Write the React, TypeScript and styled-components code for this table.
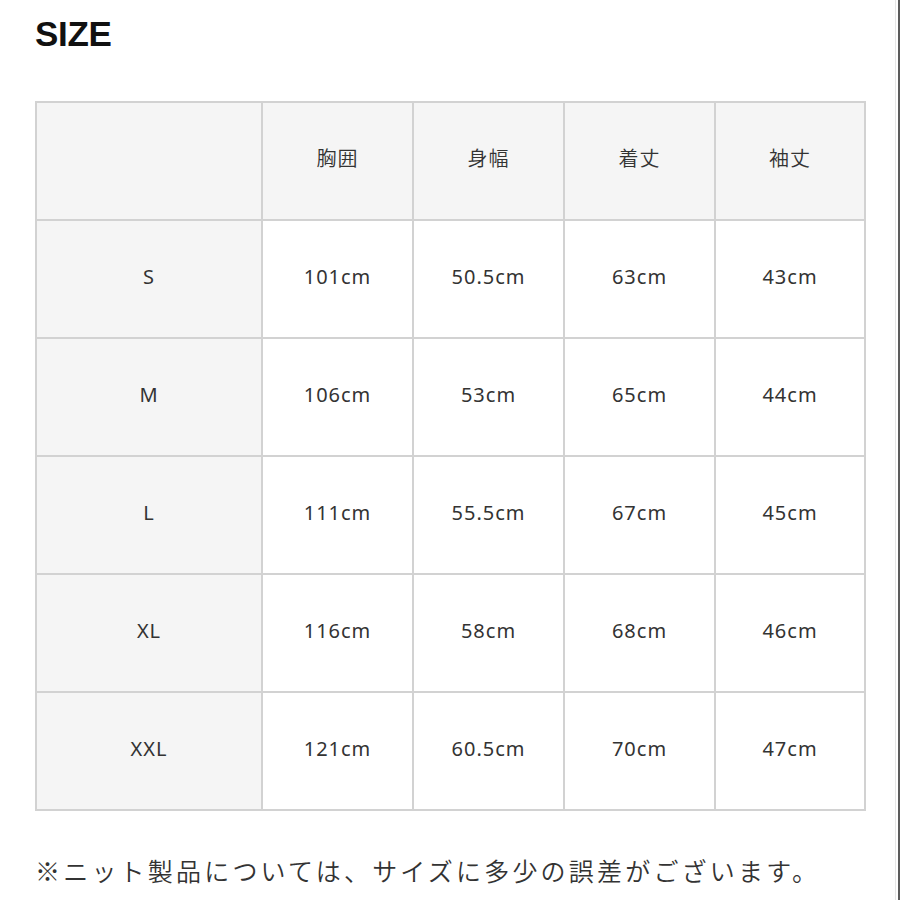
import React from "react";
import styled, { createGlobalStyle } from "styled-components";

const Global = createGlobalStyle`
  html, body { margin: 0; padding: 0; background: #fff; }
  body { font-family: "Noto Sans", "Noto Sans CJK JP", sans-serif; }
`;

const Page = styled.div`
  box-sizing: border-box;
  width: 900px;
  min-height: 900px;
  padding: 14px 0 0 35px;
  border-right: 2px solid #5c5c5c;
  position: relative;
`;

const EdgeLine = styled.div`
  position: absolute;
  top: 0;
  bottom: 0;
  right: 2px;
  width: 1px;
  background: #e6e6e6;
`;

const Title = styled.h1`
  margin: 0;
  font-family: "Liberation Sans", Arial, sans-serif;
  font-weight: 700;
  font-size: 35px;
  line-height: 40px;
  color: #111;
  letter-spacing: -0.3px;
`;

const Grid = styled.div`
  margin-top: 47px;
  display: grid;
  grid-template-columns: 224px 149px 149px 149px 148px;
  grid-auto-rows: 116px;
  gap: 2px;
  padding: 2px;
  width: max-content;
  background: #d2d2d2;
`;

const Cell = styled.div<{ $shaded?: boolean; $jp?: boolean }>`
  display: flex;
  align-items: center;
  justify-content: center;
  background: ${(p) => (p.$shaded ? "#f5f5f5" : "#ffffff")};
  color: #333;
  font-family: ${(p) =>
    p.$jp
      ? `"Noto Sans CJK JP", sans-serif`
      : `"Noto Sans", "Noto Sans CJK JP", sans-serif`};
  font-size: 20px;
  font-weight: ${(p) => (p.$jp ? 350 : 400)};
  letter-spacing: 1px;
  padding-bottom: ${(p) => (p.$jp ? "8px" : "6px")};
`;

const Note = styled.p`
  margin: 41px 0 0;
  font-family: "Noto Sans CJK JP", sans-serif;
  font-size: 25px;
  font-weight: 350;
  letter-spacing: 3.2px;
  color: #333;
  white-space: nowrap;
`;

const headers = ["胸囲", "身幅", "着丈", "袖丈"];
const rows: [string, string, string, string, string][] = [
  ["S", "101cm", "50.5cm", "63cm", "43cm"],
  ["M", "106cm", "53cm", "65cm", "44cm"],
  ["L", "111cm", "55.5cm", "67cm", "45cm"],
  ["XL", "116cm", "58cm", "68cm", "46cm"],
  ["XXL", "121cm", "60.5cm", "70cm", "47cm"],
];

export default function App() {
  return (
    <>
      <Global />
      <Page>
        <EdgeLine />
        <Title>SIZE</Title>
        <Grid>
          <Cell $shaded />
          {headers.map((h) => (
            <Cell key={h} $shaded $jp>
              {h}
            </Cell>
          ))}
          {rows.map((r) =>
            r.map((v, i) => (
              <Cell key={r[0] + i} $shaded={i === 0}>
                {v}
              </Cell>
            ))
          )}
        </Grid>
        <Note>※ニット製品については、サイズに多少の誤差がございます。</Note>
      </Page>
    </>
  );
}
